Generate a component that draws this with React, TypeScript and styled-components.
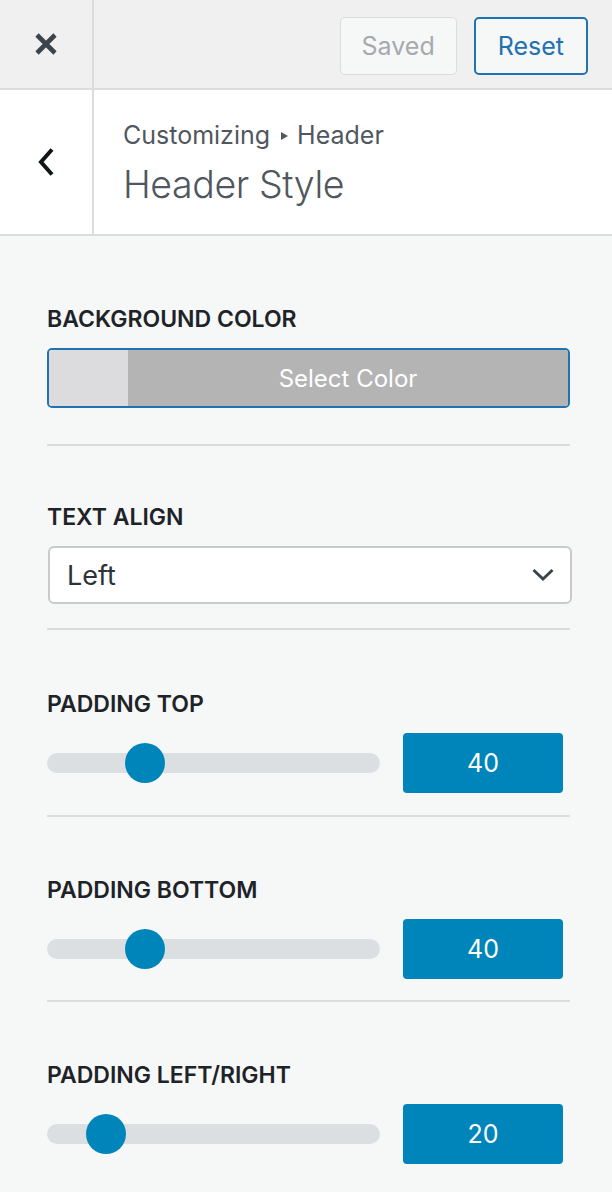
import React from "react";
import styled, { createGlobalStyle } from "styled-components";

const GlobalStyle = createGlobalStyle`
  html, body {
    margin: 0;
    padding: 0;
    background: #f6f7f7;
  }
  body {
    font-family: "Inter", "Liberation Sans", sans-serif;
    -webkit-font-smoothing: antialiased;
  }
`;

const Panel = styled.div`
  width: 612px;
  min-height: 1192px;
  display: flex;
  flex-direction: column;
  background: #f6f7f7;
`;

const TopBar = styled.div`
  display: flex;
  height: 88px;
  background: #f0f0f1;
  border-bottom: 2px solid #dcdcde;
`;

const IconCell = styled.div`
  width: 92px;
  flex: 0 0 92px;
  display: flex;
  align-items: center;
  justify-content: center;
  border-right: 2px solid #dcdcde;
`;

const Actions = styled.div`
  flex: 1;
  display: flex;
  align-items: center;
  justify-content: flex-end;
  gap: 17px;
  padding: 4px 24px 0 0;
`;

const BarButton = styled.button<{ $primary?: boolean }>`
  height: 58px;
  padding: 0 ${({ $primary }) => ($primary ? "22px" : "21px")};
  box-sizing: border-box;
  font-family: inherit;
  font-size: 25px;
  border-radius: 5px;
  background: #f6f7f7;
  color: ${({ $primary }) => ($primary ? "#2271b1" : "#a7aaad")};
  border: ${({ $primary }) =>
    $primary ? "2px solid #2271b1" : "1px solid #dcdcde"};
`;

const SectionHead = styled.div`
  display: flex;
  height: 144px;
  background: #ffffff;
  border-bottom: 2px solid #dcdcde;
`;

const TitleBlock = styled.div`
  display: flex;
  flex-direction: column;
  justify-content: center;
  padding: 4px 0 0 29px;
`;

const Crumb = styled.div`
  display: flex;
  align-items: center;
  font-size: 25px;
  line-height: 28px;
  color: #50575e;
`;

const CrumbArrow = styled.span`
  display: inline-block;
  width: 0;
  height: 0;
  margin: 2px 9px 0 11px;
  border-left: 7px solid #50575e;
  border-top: 4.5px solid transparent;
  border-bottom: 4.5px solid transparent;
`;

const Title = styled.div`
  margin-top: 14px;
  font-size: 37.5px;
  line-height: 44px;
  font-weight: 300;
  letter-spacing: -0.4px;
  color: #50575e;
`;

const Content = styled.div`
  display: flex;
  flex-direction: column;
  padding: 0 42px 0 47px;
`;

const Section = styled.div<{ $top: number; $bottom?: number; $last?: boolean }>`
  padding-top: ${({ $top }) => $top}px;
  padding-bottom: ${({ $bottom }) => $bottom ?? 0}px;
  border-bottom: ${({ $last }) => ($last ? "none" : "2px solid #dcdcde")};
`;

const Label = styled.div`
  font-size: 23px;
  line-height: 28px;
  font-weight: 600;
  color: #1d2327;
  text-transform: uppercase;
  margin-bottom: 15px;
`;

const ColorButton = styled.div`
  display: flex;
  height: 60px;
  box-sizing: border-box;
  border: 2px solid #2271b1;
  border-radius: 5px;
  overflow: hidden;
`;

const Swatch = styled.div<{ $color: string }>`
  width: 79px;
  flex: 0 0 79px;
  background: ${({ $color }) => $color};
`;

const ColorText = styled.div`
  flex: 1;
  display: flex;
  align-items: center;
  justify-content: center;
  background: #b4b4b5;
  color: #ffffff;
  font-size: 24px;
`;

const Select = styled.div`
  display: flex;
  align-items: center;
  justify-content: space-between;
  height: 58px;
  margin-left: 1px;
  margin-right: -2px;
  box-sizing: border-box;
  padding: 0 16px 0 17px;
  background: #ffffff;
  border: 2px solid #c9cacc;
  border-radius: 6px;
  font-size: 27px;
  color: #2c3338;
`;

const SliderRow = styled.div`
  display: flex;
  align-items: center;
  gap: 23px;
`;

const Track = styled.div`
  position: relative;
  flex: 0 0 333px;
  height: 20px;
  border-radius: 10px;
  background: #dcdfe2;
`;

const Thumb = styled.div`
  position: absolute;
  top: -10px;
  width: 40px;
  height: 40px;
  border-radius: 50%;
  background: #0085ba;
`;

const ValueBox = styled.div`
  width: 160px;
  height: 60px;
  display: flex;
  align-items: center;
  justify-content: center;
  background: #0085ba;
  border-radius: 4px;
  color: #ffffff;
  font-size: 25px;
`;

const CloseIcon = () => (
  <svg width="22" height="22" viewBox="0 0 22 22">
    <path
      d="M2 2 L20 20 M20 2 L2 20"
      stroke="#3c434a"
      strokeWidth="4.6"
      fill="none"
    />
  </svg>
);

const BackIcon = () => (
  <svg width="20" height="30" viewBox="0 0 20 30">
    <path
      d="M16 2.5 L5 15 L16 27.5"
      stroke="#101517"
      strokeWidth="4"
      fill="none"
    />
  </svg>
);

const ChevronDown = () => (
  <svg width="22" height="14" viewBox="0 0 22 14">
    <path
      d="M1.5 2 L11 11 L20.5 2"
      stroke="#3c434a"
      strokeWidth="3"
      fill="none"
    />
  </svg>
);

const SLIDER_MAX = 150;

const RangeControl: React.FC<{ label: string; value: number; top: number; bottom?: number; last?: boolean }> = ({
  label,
  value,
  top,
  bottom,
  last,
}) => (
  <Section $top={top} $bottom={bottom} $last={last}>
    <Label>{label}</Label>
    <SliderRow>
      <Track>
        <Thumb style={{ left: (value / SLIDER_MAX) * (333 - 40) }} />
      </Track>
      <ValueBox>{value}</ValueBox>
    </SliderRow>
  </Section>
);

const App = () => {
  return (
    <Panel>
      <GlobalStyle />
      <TopBar>
        <IconCell>
          <CloseIcon />
        </IconCell>
        <Actions>
          <BarButton>Saved</BarButton>
          <BarButton $primary>Reset</BarButton>
        </Actions>
      </TopBar>

      <SectionHead>
        <IconCell>
          <BackIcon />
        </IconCell>
        <TitleBlock>
          <Crumb>
            Customizing
            <CrumbArrow />
            Header
          </Crumb>
          <Title>Header Style</Title>
        </TitleBlock>
      </SectionHead>

      <Content>
        <Section $top={69} $bottom={36}>
          <Label>Background Color</Label>
          <ColorButton>
            <Swatch $color="#dcdcde" />
            <ColorText>Select Color</ColorText>
          </ColorButton>
        </Section>

        <Section $top={57} $bottom={24}>
          <Label>Text Align</Label>
          <Select>
            Left
            <ChevronDown />
          </Select>
        </Section>

        <RangeControl label="Padding Top" value={40} top={60} bottom={22} />
        <RangeControl label="Padding Bottom" value={40} top={59} bottom={21} />
        <RangeControl label="Padding Left/Right" value={20} top={59} last />
      </Content>
    </Panel>
  );
};

export default App;
